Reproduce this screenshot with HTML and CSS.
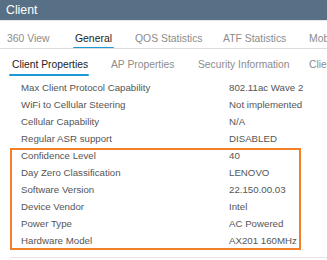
FILE: index.html
```html
<!DOCTYPE html>
<html>
<head>
<meta charset="utf-8">
<link rel="stylesheet" href="styles.css">
</head>
<body>
<div class="page">
  <div class="header">Client</div>
  <div class="tabs">
    <span class="tab t1"><span class="txt">360 View</span></span>
    <span class="tab t2 active"><span class="txt">General</span></span>
    <span class="tab t3"><span class="txt">QOS Statistics</span></span>
    <span class="tab t4"><span class="txt">ATF Statistics</span></span>
    <span class="tab t5"><span class="txt">Mobility</span></span>
  </div>
  <div class="subtabs">
    <span class="sub s1 active"><span class="txt">Client Properties</span></span>
    <span class="sub s2"><span class="txt">AP Properties</span></span>
    <span class="sub s3"><span class="txt">Security Information</span></span>
    <span class="sub s4"><span class="txt">Client Statistics</span></span>
  </div>
  <div class="rows">
    <div class="row"><span class="lbl">Max Client Protocol Capability</span><span class="val">802.11ac Wave 2</span></div>
    <div class="row"><span class="lbl">WiFi to Cellular Steering</span><span class="val">Not implemented</span></div>
    <div class="row"><span class="lbl">Cellular Capability</span><span class="val">N/A</span></div>
    <div class="row"><span class="lbl">Regular ASR support</span><span class="val">DISABLED</span></div>
    <div class="highlight">
      <div class="row"><span class="lbl">Confidence Level</span><span class="val">40</span></div>
      <div class="row"><span class="lbl">Day Zero Classification</span><span class="val">LENOVO</span></div>
      <div class="row"><span class="lbl">Software Version</span><span class="val">22.150.00.03</span></div>
      <div class="row"><span class="lbl">Device Vendor</span><span class="val">Intel</span></div>
      <div class="row"><span class="lbl">Power Type</span><span class="val">AC Powered</span></div>
      <div class="row"><span class="lbl">Hardware Model</span><span class="val">AX201 160MHz</span></div>
    </div>
  </div>
  <div class="bottomline"></div>
</div>
</body>
</html>
```
FILE: styles.css
```css
html, body { margin: 0; padding: 0; background: #fff; }
.page {
  width: 327px; height: 260px; overflow: hidden;
  font-family: "Liberation Sans", Arial, sans-serif;
  color: #555;
}
.header {
  height: 20px; background: #587086; color: #fff;
  font-size: 12.3px; line-height: 20px; padding-left: 6px;
  border-bottom: 1px solid #e6e9ec;
}
.tabs {
  height: 27px; border-bottom: 1px solid #dcdcdc;
  display: flex; white-space: nowrap; overflow: hidden;
  font-size: 10.4px; padding-left: 7px;
}
.tab { flex: none; line-height: 20px; padding-top: 8px; color: #8c8c8c; }
.t1 { width: 68px; }
.t2 { width: 60px; }
.t3 { width: 88px; }
.t4 { width: 86px; }
.txt { display: inline-block; }
.tab.active { color: #222; }
.tab.active .txt::after {
  content: ""; display: block; height: 2px; background: #1b9ad6;
  margin: -2px -2px 0; border-radius: 1px;
}
.subtabs {
  height: 29px; display: flex; white-space: nowrap; overflow: hidden;
  font-size: 10.3px; padding-left: 12px;
}
.sub { flex: none; line-height: 20px; padding-top: 6px; color: #8c8c8c; }
.s1 { width: 99px; }
.s2 { width: 87px; }
.s3 { width: 111px; }
.sub.active { color: #222; }
.sub.active .txt::after {
  content: ""; display: block; height: 2px; background: #1b9ad6;
  margin: -1px 0 0 -3px; border-radius: 1px; width: 80px;
}
.rows { padding-top: 1px; }
.row { display: flex; height: 17px; line-height: 17px; font-size: 9.7px; }
.lbl { width: 208px; padding-left: 21px; flex: none; }
.highlight { position: relative; }
.highlight::after {
  content: ""; position: absolute; left: 10px; top: 1px; width: 291px; height: 102px;
  border: 2px solid #f2802a; box-sizing: border-box;
}
.bottomline { margin: 8px 0 0 10px; height: 1px; background: #e4e4e4; }
```
